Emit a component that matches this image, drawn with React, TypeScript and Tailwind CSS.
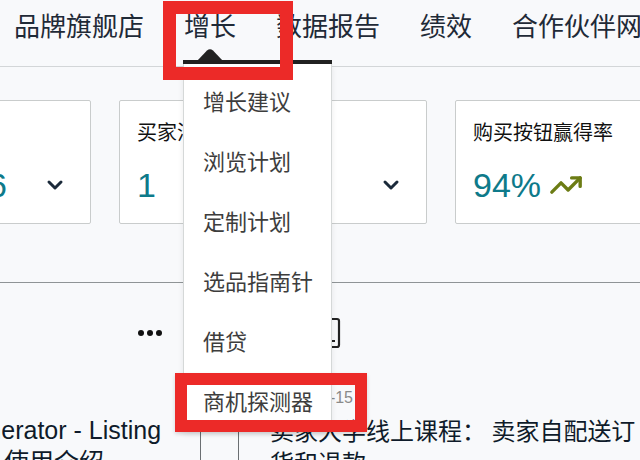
import { ChevronDown, TrendingUp } from "lucide-react";

const navItems = ["品牌旗舰店", "增长", "数据报告", "绩效", "合作伙伴网络"];

const menuItems = ["增长建议", "浏览计划", "定制计划", "选品指南针", "借贷", "商机探测器"];

type CardProps = {
  label: string;
  value: string;
  chevron?: boolean;
  trend?: boolean;
  alignEnd?: boolean;
};

const MetricCard = ({ label, value, chevron, trend, alignEnd }: CardProps) => {
  return (
    <div className="h-[124px] w-[308px] shrink-0 rounded-[2px] border border-[#c9cccc] bg-white px-[17px] pt-[20px]">
      <p className="whitespace-nowrap text-[20px] leading-[24px] text-[#111]">{label}</p>
      <div
        className={
          alignEnd
            ? "mt-[20px] flex items-center justify-end gap-[36px] pr-[6px]"
            : "mt-[20px] flex items-center pr-[6px]"
        }
      >
        <span className="text-[34px] leading-[40px] text-[#0e7a8a]">{value}</span>
        {trend && <TrendingUp className="ml-[8px] text-[#6c7c14]" size={34} strokeWidth={2.4} />}
        {chevron && (
          <ChevronDown className={alignEnd ? "text-[#1b2a3a]" : "ml-auto text-[#1b2a3a]"} size={24} strokeWidth={3} />
        )}
      </div>
    </div>
  );
};

const GrowthMenu = () => {
  return (
    <div className="absolute left-[183px] top-[60px] w-[149px]">
      <svg className="absolute left-[14px] top-[-11px]" width="26" height="12" viewBox="0 0 26 12">
        <path d="M0 12 L10 1.5 Q13 -1 16 1.5 L26 12 Z" fill="#222" />
      </svg>
      <div className="h-[4px] bg-[#222]" />
      <div className="h-[368px] border-x border-[#d5d8d8] bg-white pt-[8px] shadow-[0_2px_6px_rgba(0,0,0,0.08)]">
        {menuItems.map((item) => (
          <div key={item} className="flex h-[60px] items-center pl-[19px] text-[22px] text-[#3d3d3d]">
            {item}
          </div>
        ))}
      </div>
    </div>
  );
};

export default function App() {
  return (
    <div className="relative h-[460px] w-[640px] overflow-hidden bg-[#f8f9fb] font-['Liberation_Sans','Noto_Sans_CJK_SC',sans-serif]">
      <nav className="flex h-[67px] gap-[40px] border-b border-[#d3d6d8] pl-[14px] pt-[8px] font-['Noto_Sans_CJK_SC',sans-serif] text-[26px] leading-[34px] text-[#1f2a37]">
        {navItems.map((item) => (
          <span key={item} className="whitespace-nowrap">
            {item}
          </span>
        ))}
      </nav>

      <div className="ml-[-217px] mt-[33px] flex gap-[28px]">
        <MetricCard label="买家访问次数" value="6" chevron alignEnd />
        <MetricCard label="买家消息回复" value="1" chevron />
        <MetricCard label="购买按钮赢得率" value="94%" trend />
      </div>

      <div className="h-[59px] border-b border-[#8f9496]" />

      <div className="flex h-[99px] items-center">
        <div className="ml-[138px] flex gap-[3px]">
          <span className="h-[6px] w-[6px] rounded-full bg-[#111]" />
          <span className="h-[6px] w-[6px] rounded-full bg-[#111]" />
          <span className="h-[6px] w-[6px] rounded-full bg-[#111]" />
        </div>
        <svg className="ml-[156px]" width="24" height="32" viewBox="0 0 24 32">
          <rect x="2" y="2" width="19" height="28" rx="2" fill="none" stroke="#222" strokeWidth="2.2" />
          <path d="M14 24 H17" stroke="#222" strokeWidth="2" />
        </svg>
      </div>

      <div className="flex h-[32px] w-[353px] items-center justify-end text-[16px] text-[#8a8a8a]">2022-11-15</div>

      <div className="flex text-[25px] leading-[32px] text-[#0f1b2a]">
        <div className="w-[200px] shrink-0 overflow-hidden">
          <p className="ml-[-46px] whitespace-nowrap">
            Generator - Listing
            <br />
            工具使用介绍
          </p>
        </div>
        <div className="mt-[16px] h-[60px] w-[39px] shrink-0 border-x border-[#6b6f72]" />
        <p className="ml-[31px] whitespace-nowrap font-['Noto_Sans_CJK_SC',sans-serif] text-[24px]">
          卖家大学线上课程： 卖家自配送订
          <br />
          货和退款
        </p>
      </div>

      <GrowthMenu />

      <div className="absolute left-[163px] top-[1px] h-[79px] w-[130px] border-[13px] border-[#ec2a28]" />
      <div className="absolute left-[175px] top-[373px] h-[59px] w-[192px] border-[12px] border-[#ec2a28] shadow-[0_2px_4px_rgba(0,0,0,0.15)]" />
    </div>
  );
}
